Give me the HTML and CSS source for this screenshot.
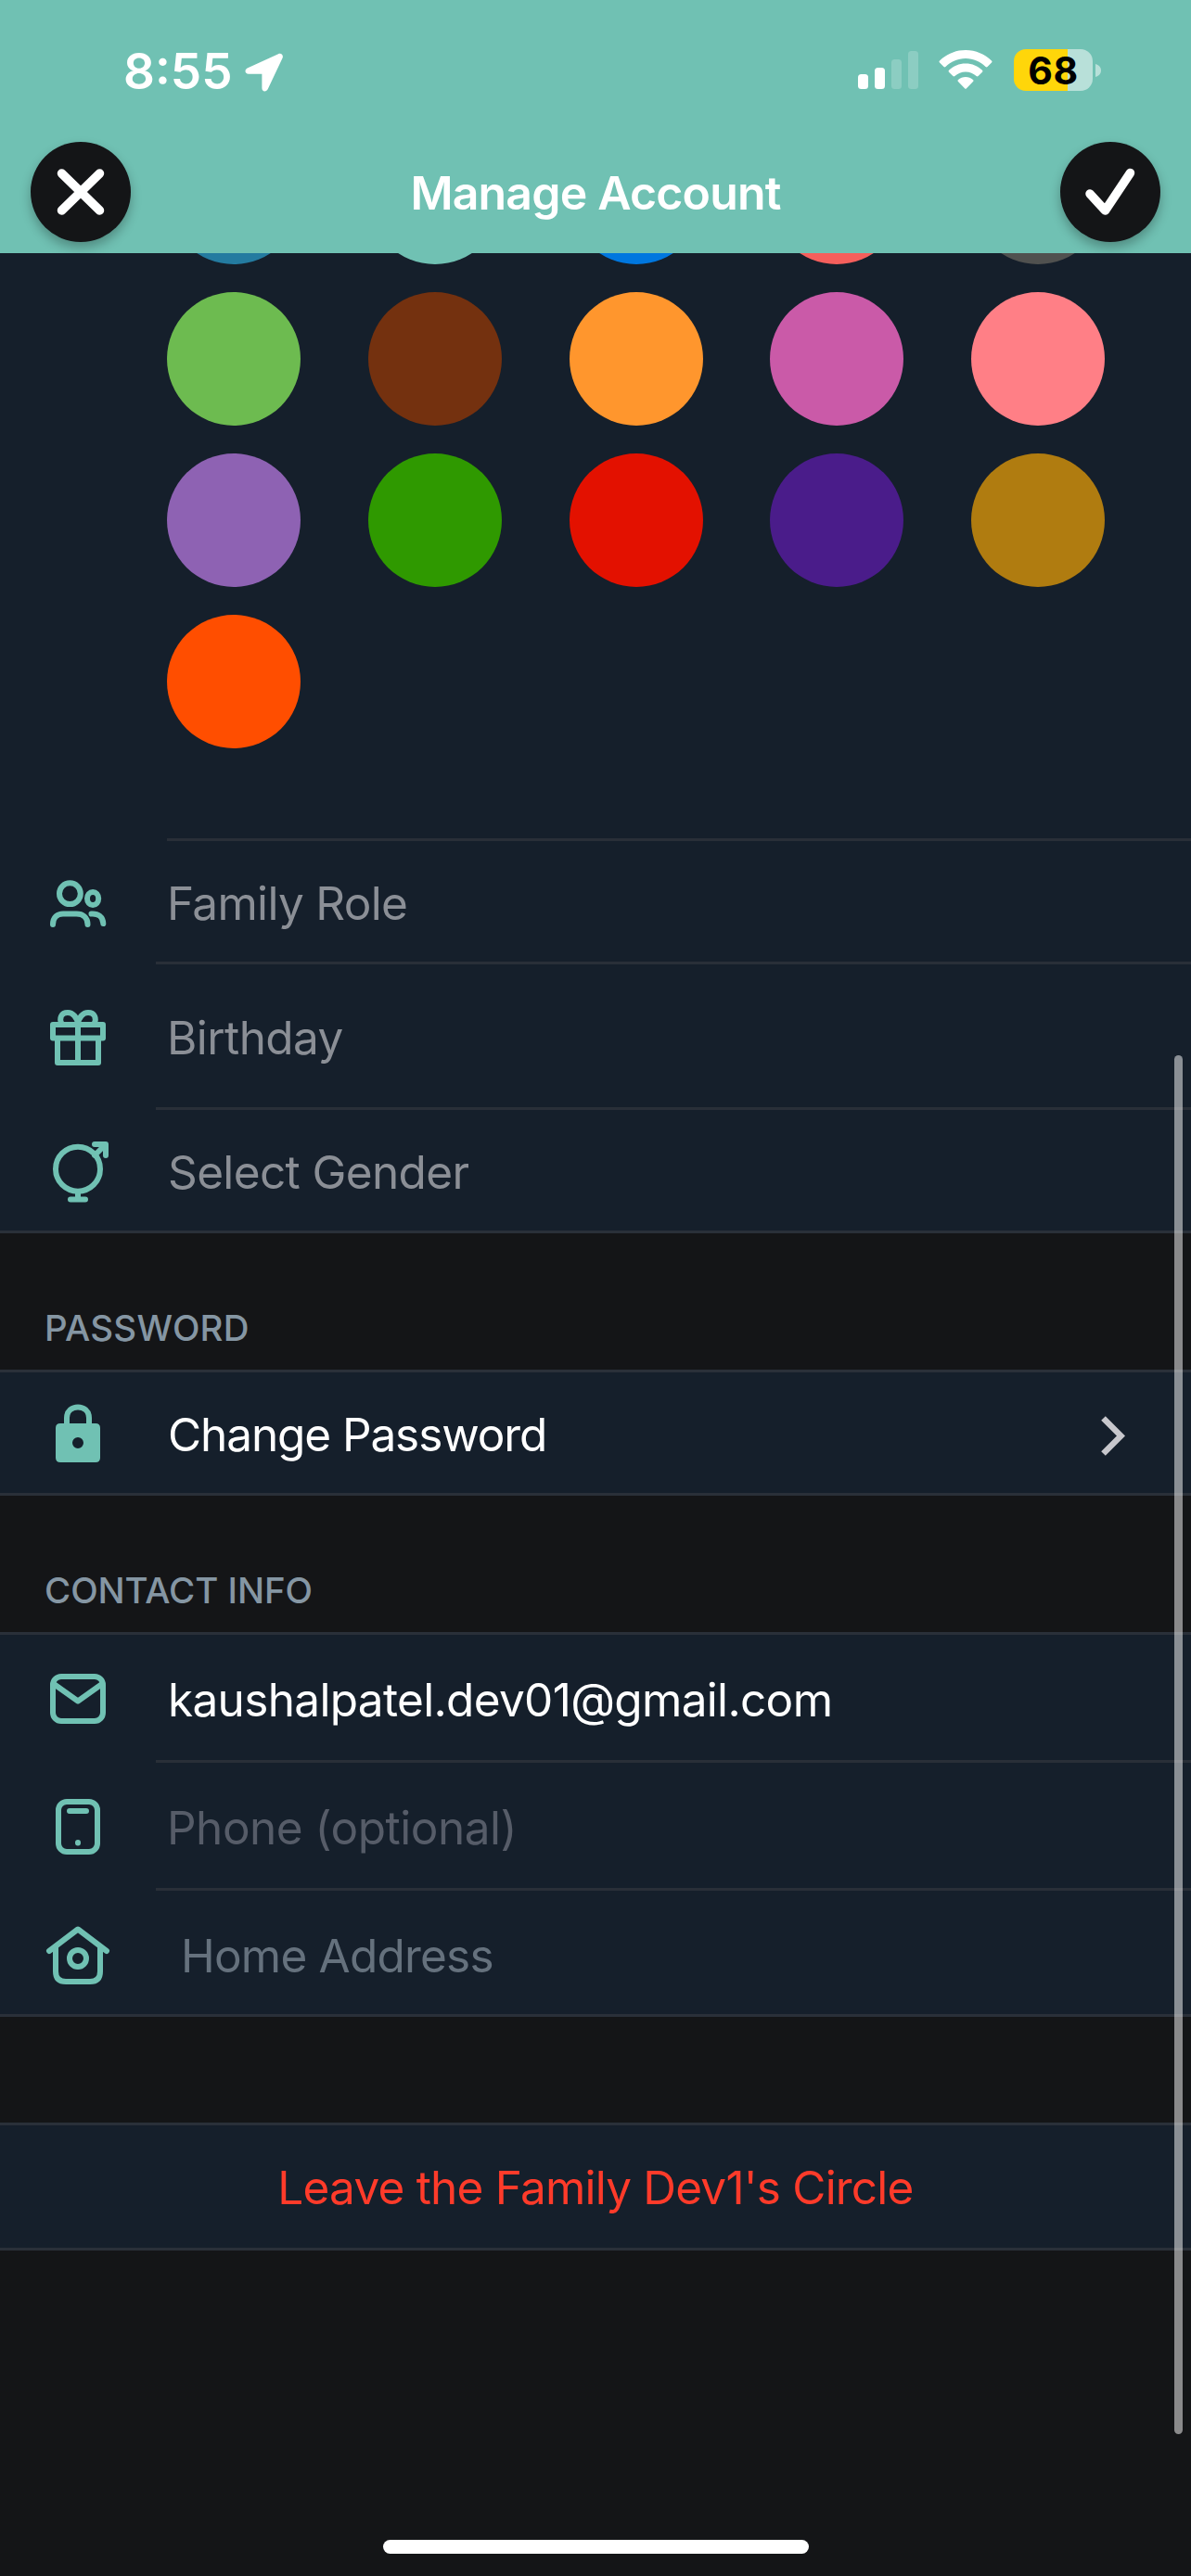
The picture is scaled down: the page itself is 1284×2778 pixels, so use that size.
FILE: index.html
```html
<!DOCTYPE html>
<html lang="en">
<head>
<meta charset="utf-8">
<title>Manage Account</title>
<link rel="stylesheet" href="styles.css">
</head>
<body>
<div class="screen">
  <header class="header">
    <div class="status">
      <div class="status-left">
        <span class="time">8:55</span>
        <svg class="location" width="42" height="42" viewBox="0 0 42 42"><path d="M36 1.2 2.6 16.6C-.8 18.5.2 22.8 4 22.8H18.4V38C18.4 42.2 23.2 42.6 24.8 39L40.6 5.6C41.8 2.4 39.2-.2 36 1.2Z" fill="#fff"/></svg>
      </div>
      <div class="status-right">
        <div class="signal"><i class="bar b1"></i><i class="bar b2"></i><i class="bar b3 dim"></i><i class="bar b4 dim"></i></div>
        <svg class="wifi" width="58" height="42" viewBox="0 0 58 42" fill="#fff"><path d="M29 0C40 0 50 4.600 57 11.500Q58 12.600 57 13.600L52.500 18Q51.600 18.800 50.600 17.900C45 12.500 37.500 9 29 9S13 12.500 7.400 17.900Q6.400 18.800 5.500 18L1 13.600Q0 12.600 1 11.500C8 4.600 18 0 29 0Z"/><path d="M29 14.500C36 14.500 42.300 17.200 47 21.800Q48 22.800 47 23.800L42.600 28.100Q41.600 29 40.600 28.100C37.500 25.200 33.500 23.500 29 23.500S20.500 25.200 17.400 28.100Q16.400 29 15.400 28.100L11 23.800Q10 22.800 11 21.800C15.700 17.200 22 14.500 29 14.500Z"/><path d="M29 29C32 29 34.800 30 37 32Q38 33 37 34L30 41.300Q29 42.300 28 41.300L21 34Q20 33 21 32C23.200 30 26 29 29 29Z"/></svg>
        <div class="battery"><span class="level">68</span><svg class="nub" width="6" height="14" viewBox="0 0 6 14"><path d="M0 0C3.500 1 6 3.500 6 7S3.500 13 0 14Z" fill="#b8e0d9"/></svg></div>
      </div>
    </div>
    <nav class="nav">
      <button class="round" aria-label="Close"><svg width="108" height="108" viewBox="0 0 108 108"><path d="M33.500 34 74.500 74M74.500 34 33.500 74" stroke="#fff" stroke-width="9.500" stroke-linecap="round"/></svg></button>
      <h1 class="title">Manage Account</h1>
      <button class="round" aria-label="Save"><svg width="108" height="108" viewBox="0 0 108 108"><path d="M32 56 48.500 74 75.500 33.500" fill="none" stroke="#fff" stroke-width="9.500" stroke-linecap="round" stroke-linejoin="round"/></svg></button>
    </nav>
  </header>

  <main class="content">
    <section class="card profile">
      <div class="swatches">
        <i class="swatch steel"></i><i class="swatch mint"></i><i class="swatch blue"></i><i class="swatch coral"></i><i class="swatch gray"></i>
        <i class="swatch lime"></i><i class="swatch brown"></i><i class="swatch orange"></i><i class="swatch pink"></i><i class="swatch salmon"></i>
        <i class="swatch lilac"></i><i class="swatch green"></i><i class="swatch red"></i><i class="swatch indigo"></i><i class="swatch gold"></i>
        <i class="swatch flame"></i>
      </div>
      <div class="row role">
        <svg class="icon" viewBox="0 0 72 72"><circle cx="27.400" cy="27.700" r="11.400"/><ellipse cx="52.100" cy="33" rx="6.100" ry="7"/><path d="M9 61C9 53 14 49.500 20 49.500H34.500C41 49.500 46.500 53 46.500 61M50.500 49.500C58 49 63 52.500 63.300 60"/></svg>
        <div class="label muted t-role"><span>Family Role</span></div>
      </div>
      <div class="row birthday">
        <svg class="icon" viewBox="0 0 72 72"><path d="M9 24H63V38.500H9ZM14 38.500V65H58V38.500M36 24V65M36 23C35 16 30.500 11 25 11C18 11 15.500 17 18.500 23M36 23C37 16 41.500 11 47 11C54 11 56.500 17 53.500 23"/></svg>
        <div class="label muted t-birthday"><span>Birthday</span></div>
      </div>
      <div class="row gender">
        <svg class="icon" viewBox="0 0 72 72"><circle cx="36" cy="34.700" r="24"/><path d="M36 59V67M28 67.500H44M54 8H66V20M54 20 65 9"/></svg>
        <div class="label muted last t-gender"><span>Select Gender</span></div>
      </div>
    </section>

    <h2 class="section-title t-pass">PASSWORD</h2>
    <section class="card framed">
      <div class="row password">
        <svg class="icon" viewBox="0 0 72 72"><path d="M24 27V20C24 4.500 48 4.500 48 20V27"/><path d="M17 26H55Q60 26 60 31V63Q60 68 55 68H17Q12 68 12 63V31Q12 26 17 26ZM36 41A6 6 0 1 0 36 53A6 6 0 1 0 36 41Z" fill="#70c1b3" stroke="none" fill-rule="evenodd"/></svg>
        <div class="label last t-change"><span>Change Password</span><svg class="chevron" width="26" height="43" viewBox="0 0 26 43"><path d="M2.500 2.500 21.500 21.500 2.500 40.500" fill="none" stroke="#c7c7cc" stroke-width="6.500"/></svg></div>
      </div>
    </section>

    <h2 class="section-title t-contact">CONTACT INFO</h2>
    <section class="card framed">
      <div class="row contact">
        <svg class="icon tall" viewBox="0 0 72 73"><rect x="9" y="14" width="54" height="48" rx="9"/><path d="M10 22 36 40.500 62 22"/></svg>
        <div class="label t-mail"><span>kaushalpatel.dev01@gmail.com</span></div>
      </div>
      <div class="row contact">
        <svg class="icon tall" viewBox="0 0 72 73"><rect x="15" y="11" width="42" height="54" rx="9"/><path d="M27 21H45M36 55V55.500"/></svg>
        <div class="label faint t-phone"><span>Phone (optional)</span></div>
      </div>
      <div class="row home">
        <svg class="icon tall" viewBox="0 0 72 73"><path d="M5 35 36 11.500 67 35M12 31V57Q12 68 23 68H49Q60 68 60 57V31"/><circle cx="36" cy="43" r="9"/></svg>
        <div class="label slate last t-home"><span>Home Address</span></div>
      </div>
    </section>

    <section class="card framed leave"><span>Leave the Family Dev1's Circle</span></section>
  </main>
  <div class="scrollbar"></div>
  <div class="home-indicator"></div>
</div>
</body>
</html>
```
FILE: styles.css
```css
* { box-sizing: border-box; }
body {
  margin: 0;
  background: #141517;
  font-family: Inter, "Liberation Sans", sans-serif;
  color: #fff;
}
.screen {
  position: relative;
  display: flex;
  flex-direction: column;
  width: 1284px;
  height: 2778px;
  overflow: hidden;
  background: #141517;
}
svg { display: block; flex: none; }

.header { height: 273px; background: #70c1b3; flex: none; }
.status {
  display: flex;
  justify-content: space-between;
  height: 153px;
  padding: 53px 97px 0 133px;
}
.status-left, .status-right { display: flex; align-items: flex-start; }
.time { width: 131px; font-size: 53px; font-weight: 600; line-height: 48px; white-space: nowrap; }
.location { margin-top: 4px; }
.signal { display: flex; align-items: flex-end; gap: 7px; height: 43px; margin-right: 22px; }
.bar { width: 11px; border-radius: 3.5px; background: #fff; }
.bar.dim { opacity: 0.2; }
.b1 { height: 16px; }
.b2 { height: 23px; }
.b3 { height: 32px; }
.b4 { height: 41px; }
.wifi { margin: 1px 23px 0 0; }
.battery { display: flex; align-items: center; gap: 3px; }
.level {
  width: 85px;
  height: 45px;
  border-radius: 13px;
  background: linear-gradient(90deg, #ffd60a 58px, #b8e0d9 58px);
  color: #000;
  font-size: 41px;
  font-weight: 700;
  line-height: 46px;
  text-align: center;
  letter-spacing: 0.5px;
}
.nav {
  display: flex;
  align-items: center;
  justify-content: space-between;
  height: 108px;
  padding: 0 33px;
}
.round {
  width: 108px;
  height: 108px;
  padding: 0;
  border: 0;
  border-radius: 50%;
  background: #141517;
  box-shadow: 0 6px 12px rgba(0, 0, 0, 0.28);
}
.title {
  margin: 2px 0 0;
  font-size: 50px;
  font-weight: 600;
  line-height: 60px;
  letter-spacing: -0.83px;
  white-space: nowrap;
}

.content { display: flex; flex-direction: column; }
.card { background: #151f2b; }
.profile { height: 1057px; border-bottom: 3px solid #2a3039; overflow: hidden; }
/* The first swatch row is partly scrolled under the header. */
.swatches {
  display: grid;
  grid-template-columns: repeat(5, 144px);
  grid-auto-rows: 144px;
  column-gap: 72.75px;
  row-gap: 30px;
  height: 766px;
  margin-left: 180px;
  margin-top: -132px;
  border-bottom: 3px solid #292f38;
}
.swatch { border-radius: 50%; }
.steel { background: #247ba0; }
.mint { background: #70c1b3; }
.blue { background: #0077df; }
.coral { background: #f55f5c; }
.gray { background: #50514f; }
.lime { background: #6dbb50; }
.brown { background: #74310f; }
.orange { background: #ff962d; }
.pink { background: #ca5aa8; }
.salmon { background: #ff7f86; }
.lilac { background: #8e62b3; }
.green { background: #2f9900; }
.red { background: #e31100; }
.indigo { background: #4a1c8a; }
.gold { background: #b07c10; }
.flame { background: #ff4e00; }

.row { display: flex; align-items: center; }
.role { height: 133px; }
.birthday { height: 157px; }
.gender, .password { height: 130px; }
.contact { height: 138px; }
.home { height: 133px; }
.icon {
  width: 72px;
  height: 72px;
  margin: 0 48px;
  fill: none;
  stroke: #70c1b3;
  stroke-width: 6;
  stroke-linecap: round;
  stroke-linejoin: round;
}
.icon.tall { height: 73px; }
.role .icon, .birthday .icon, .contact .icon { margin-bottom: 3px; }
.label {
  display: flex;
  align-items: center;
  justify-content: space-between;
  flex: 1;
  height: 100%;
  padding: 4px 71px 0 12px;
  border-bottom: 3px solid #292f38;
  font-size: 49.5px;
  white-space: nowrap;
}
.label.last { border-bottom: 0; }
.chevron { margin-top: 3px; }
.muted { color: #8b8f96; }
.faint { color: #565c68; }
.slate { color: #65717d; }
.t-role { letter-spacing: -0.69px; }
.t-birthday { letter-spacing: -0.58px; }
.t-gender { letter-spacing: -0.63px; padding-left: 13px; }
.t-change { letter-spacing: -1.1px; padding-left: 13px; }
.t-mail { letter-spacing: -0.67px; padding-left: 13px; }
.t-phone { letter-spacing: -0.5px; }
.t-home { letter-spacing: -0.8px; padding-left: 27px; padding-top: 6px; }

.section-title {
  margin: 0;
  height: 147px;
  padding: 79px 0 0 48px;
  font-size: 38.5px;
  font-weight: 500;
  line-height: 46px;
  color: #8596a3;
}
.t-pass { letter-spacing: 0.2px; }
.t-contact { letter-spacing: -0.09px; }
.framed { border-top: 3px solid #2a3039; border-bottom: 3px solid #2a3039; }
.leave {
  display: flex;
  align-items: center;
  justify-content: center;
  height: 138px;
  margin-top: 114px;
  padding-top: 2px;
  font-size: 49.5px;
  letter-spacing: -0.79px;
  color: #ff3b2a;
  white-space: nowrap;
}
.scrollbar {
  position: absolute;
  left: 1266px;
  top: 1138px;
  width: 9px;
  height: 1487px;
  border-radius: 5px;
  background: rgba(255, 255, 255, 0.5);
}
.home-indicator {
  position: absolute;
  left: 413px;
  top: 2739px;
  width: 459px;
  height: 15px;
  border-radius: 8px;
  background: #fff;
}
```
